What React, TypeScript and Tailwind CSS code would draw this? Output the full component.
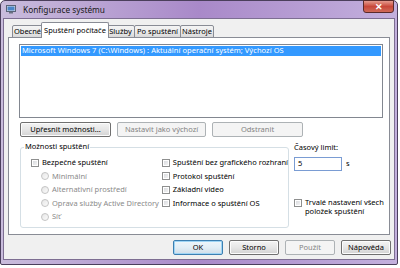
import React from 'react';

const Check = () => (
  <span className="w-[8px] h-[8px] shrink-0 border border-[#8e8f8f] bg-gradient-to-br from-[#d4d6da] to-[#f8f8f8] shadow-[inset_0_0_0_1px_#ffffff]"></span>
);

const Radio = () => (
  <span className="w-[8px] h-[8px] shrink-0 rounded-full border border-[#c4c4c4] bg-gradient-to-br from-[#e6e6e6] to-[#fbfbfb]"></span>
);

const Btn = ({ children, className }: { children: React.ReactNode; className: string }) => (
  <div className={`h-[15px] rounded-[2px] border flex items-center justify-center ${className}`}>{children}</div>
);

const normalBtn = 'border-[#707070] bg-gradient-to-b from-[#f4f4f4] via-[#e6e6e6] to-[#d3d3d3] shadow-[inset_0_0_0_1px_#fcfcfc]';
const disabledBtn = 'border-[#adb2b5] bg-[#f4f4f4] text-[#838383]';

const App = () => {
  const tabs = [
    { label: 'Obecné', w: 'w-[31px]' },
    { label: 'Spuštění počítače', w: 'w-[68px]', active: true },
    { label: 'Služby', w: 'w-[29px]' },
    { label: 'Po spuštění', w: 'w-[47px]' },
    { label: 'Nástroje', w: 'w-[34px]' },
  ];

  return (
    <div className="w-[400px] h-[268px] bg-white font-['Segoe_UI','Noto_Sans',sans-serif] text-[7.5px] text-black leading-none whitespace-nowrap">
      {/* Window frame */}
      <div className="w-[398px] h-[265px] flex flex-col rounded-t-[5px] rounded-b-[2px] border border-[#4b3f5c] bg-gradient-to-r from-[#c9bcdc] via-[#a989c9] to-[#c3b0dd] px-[2px] pb-[4px]">
        {/* Title bar */}
        <div className="h-[17px] flex items-start shrink-0">
          <svg width="10" height="9" viewBox="0 0 10 9" className="mt-[4px] ml-[3px]">
            <rect x="0.5" y="0.5" width="9" height="6" fill="#d8dde6" stroke="#5a6478" />
            <rect x="1.5" y="1.5" width="7" height="4" fill="#4a86c8" />
            <rect x="3" y="7" width="4" height="1.5" fill="#6a7282" />
          </svg>
          <span className="ml-[7px] mt-[5px] text-[8.3px] text-[#1a1a1a]">Konfigurace systému</span>
          <div className="ml-auto mr-[1px] w-[31px] h-[13px] -mt-px rounded-b-[3px] border border-[#5a2a2a] bg-gradient-to-b from-[#e49a8e] via-[#c8473a] to-[#cf6a58] flex items-center justify-center">
            <span className="text-white text-[9px] font-bold leading-none">✕</span>
          </div>
        </div>

        {/* Client area */}
        <div className="flex-1 flex flex-col border border-[#7d6e92] bg-[#f0f0f0]">
          {/* Tab strip */}
          <div className="flex items-end h-[16px] mt-[3px] pl-[8px] -mb-px relative z-10 shrink-0">
            {tabs.map((t) =>
              t.active ? (
                <div
                  key={t.label}
                  className={`${t.w} -mx-[2px] h-[16px] relative z-10 border border-b-0 border-[#898c95] bg-white flex items-start justify-center pt-[4px] rounded-t-[2px]`}
                >
                  {t.label}
                </div>
              ) : (
                <div
                  key={t.label}
                  className={`${t.w} h-[13px] border border-[#898c95] bg-gradient-to-b from-[#f4f4f4] via-[#ebebeb] to-[#d9d9d9] flex items-center justify-center rounded-t-[2px] -ml-px first:ml-0`}
                >
                  {t.label}
                </div>
              )
            )}
          </div>

          {/* Tab panel */}
          <div className="mx-[4px] h-[198px] shrink-0 border border-[#898c95] bg-white flex flex-col">
            {/* List box */}
            <div className="ml-[10px] mr-[6px] mt-[6px] h-[74px] border border-[#828790] bg-white p-[1px]">
              <div className="h-[10px] bg-[#3399ff] text-white flex items-center pl-[1px] tracking-[0.05px]">
                Microsoft Windows 7 (C:\Windows) : Aktuální operační systém; Výchozí OS
              </div>
            </div>

            {/* Buttons */}
            <div className="flex gap-[6px] ml-[11px] mt-[4px]">
              <Btn className={`w-[91px] ${normalBtn}`}>Upřesnit možnosti...</Btn>
              <Btn className={`w-[89px] ${disabledBtn}`}>Nastavit jako výchozí</Btn>
              <Btn className={`w-[91px] ${disabledBtn}`}>Odstranit</Btn>
            </div>

            {/* Options */}
            <div className="flex mt-[10px] ml-[11px]">
              <div className="relative w-[269px] h-[81px] border border-[#d5dfe5] rounded-[3px] flex pt-[8px] pl-[10px]">
                <span className="absolute -top-[5px] left-[3px] bg-white px-[1px]">Možnosti spuštění</span>
                <div className="w-[131px] flex flex-col">
                  <div className="h-[13.5px] flex items-center gap-[3px]">
                    <Check />
                    <span>Bezpečné spuštění</span>
                  </div>
                  {['Minimální', 'Alternativní prostředí', 'Oprava služby Active Directory', 'Síť'].map((r) => (
                    <div key={r} className="h-[13.5px] flex items-center gap-[3px] pl-[10px] text-[#8a8a8a]">
                      <Radio />
                      <span>{r}</span>
                    </div>
                  ))}
                </div>
                <div className="flex flex-col">
                  {['Spuštění bez grafického rozhraní', 'Protokol spuštění', 'Základní video', 'Informace o spuštění OS'].map((c) => (
                    <div key={c} className="h-[13.5px] flex items-center gap-[3px]">
                      <Check />
                      <span>{c}</span>
                    </div>
                  ))}
                </div>
              </div>

              <div className="ml-[4px] flex flex-col -mt-[3px]">
                <span className="ml-px">Časový limit:</span>
                <div className="flex items-center mt-[5px] ml-[1px]">
                  <div className="w-[48px] h-[14px] border border-[#7a9cd3] bg-white flex items-center pl-[3px]">5</div>
                  <span className="ml-[4px]">s</span>
                </div>
                <div className="flex items-start gap-[3px] mt-[28px] ml-[1px]">
                  <Check />
                  <span className="leading-[9px] -mt-px">
                    Trvalé nastavení všech
                    <br />
                    položek spuštění
                  </span>
                </div>
              </div>
            </div>
          </div>

          {/* Dialog buttons */}
          <div className="flex justify-end gap-[6px] mt-[5px] pr-[3px]">
            <Btn className="w-[50px] border-[#3c7fb1] bg-gradient-to-b from-[#eef6fb] via-[#e2eef6] to-[#cfdde8] shadow-[inset_0_0_0_1px_#9fd5f5]">OK</Btn>
            <Btn className={`w-[50px] ${normalBtn}`}>Storno</Btn>
            <Btn className={`w-[50px] ${disabledBtn}`}>Použít</Btn>
            <Btn className={`w-[50px] ${normalBtn}`}>Nápověda</Btn>
          </div>
        </div>
      </div>
    </div>
  );
};

export default App;
